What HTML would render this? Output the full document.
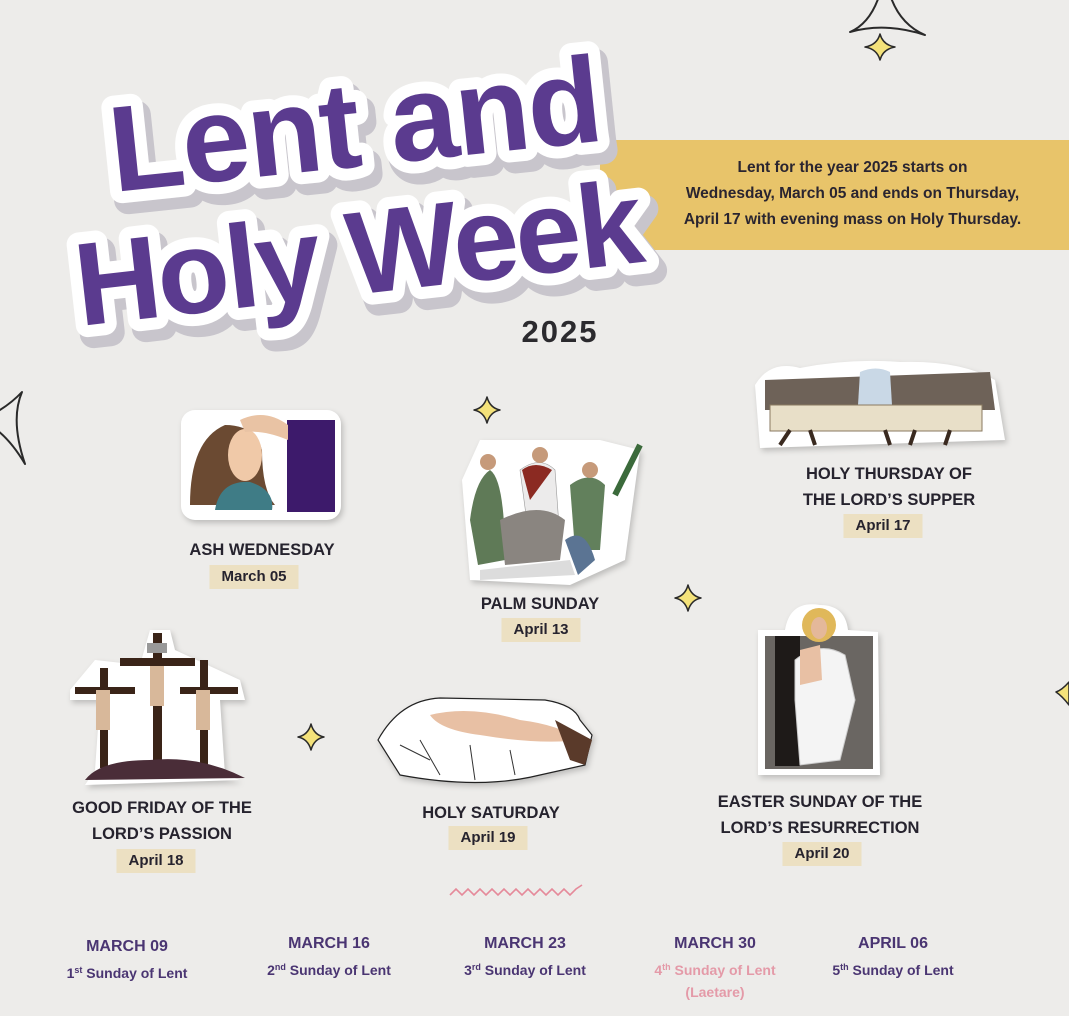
<!DOCTYPE html>
<html><head><meta charset="utf-8"><style>
*{margin:0;padding:0;box-sizing:border-box}
body{width:1069px;height:1016px;overflow:hidden;background:#edecea;position:relative;font-family:"Liberation Sans",sans-serif}
.a{position:absolute}
.lbl{position:absolute;text-align:center;font-weight:bold;color:#26232e;font-size:16.5px;line-height:26px;transform:translateX(-50%);white-space:nowrap}
.pill{position:absolute;background:#ece0c2;color:#26232e;font-weight:bold;font-size:15px;height:24px;line-height:24px;padding:0 12px;transform:translateX(-50%);white-space:nowrap}
.sun{position:absolute;text-align:center;transform:translateX(-50%);white-space:nowrap;color:#4a3572;font-weight:bold}
.sun b{display:block;font-size:16px;line-height:24px}
.sun span{display:block;font-size:14px;line-height:22px}
.sun sup{font-size:9px;vertical-align:5px}
.banner{position:absolute;left:600px;top:140px;width:469px;height:110px;background:#e8c46a;color:#2a2530;font-size:15.5px;font-weight:bold;text-align:center;line-height:26px;padding-top:15px;padding-left:36px}
</style></head><body>

<div class="banner">Lent for the year 2025 starts on<br>Wednesday, March 05 and ends on Thursday,<br>April 17 with evening mass on Holy Thursday.</div>

<svg class="a" style="left:0;top:0" width="1069" height="1016">
<g font-family="Liberation Sans" font-weight="bold" paint-order="stroke" stroke-linejoin="round">
 <g font-size="122" letter-spacing="-2">
 <g transform="translate(120,201) rotate(-6)"><text fill="#c8c5cc" stroke="#c8c5cc" stroke-width="28">Lent and</text></g>
 <g transform="translate(114,192) rotate(-6)"><text fill="#5b3b8f" stroke="#fff" stroke-width="24">Lent and</text></g>
 </g>
 <g font-size="118" letter-spacing="-3">
 <g transform="translate(86,335) rotate(-6.5)"><text fill="#c8c5cc" stroke="#c8c5cc" stroke-width="28">Holy Week</text></g>
 <g transform="translate(80,326) rotate(-6.5)"><text fill="#5b3b8f" stroke="#fff" stroke-width="24">Holy Week</text></g>
 </g>
</g>
<text x="560" y="342" text-anchor="middle" font-family="Liberation Sans" font-weight="bold" font-size="31" fill="#2b2a2e" letter-spacing="2">2025</text>

<!-- stars -->
<g fill="#f4e27a" stroke="#2a2a2a" stroke-width="1.5" stroke-linejoin="round">
 <path d="M885 -30 Q890 20 925 35 Q885 22 850 32 Q878 20 885 -30Z" fill="none" stroke-width="2"/>
 <path d="M880 34 Q883 45 895 47 Q883 49 880 60 Q877 49 865 47 Q877 45 880 34Z"/>
 <path d="M487 397 Q490 408 500 410 Q490 412 487 423 Q484 412 474 410 Q484 408 487 397Z"/>
 <path d="M688 585 Q691 596 701 598 Q691 600 688 611 Q685 600 675 598 Q685 596 688 585Z"/>
 <path d="M311 724 Q314 735 324 737 Q314 739 311 750 Q308 739 298 737 Q308 735 311 724Z"/>
 <path d="M-20 420 Q5 410 22 392 Q10 420 25 464 Q5 430 -20 420Z" fill="none" stroke-width="2"/>
 <path d="M1069 682 Q1062 690 1056 692 Q1062 696 1069 705Z"/>
</g>
<path d="M450 895 l6 -6 l6 6 l6 -6 l6 6 l6 -6 l6 6 l6 -6 l6 6 l6 -6 l6 6 l6 -6 l6 6 l6 -6 l6 6 l6 -6 l6 6 l6 -6 l6 6 l6 -6 l6 6 l6 -6 l6 -4" fill="none" stroke="#e58a9a" stroke-width="1.6"/>

<!-- Ash Wednesday -->
<g>
 <rect x="181" y="410" width="160" height="110" rx="14" fill="#fff" filter="drop-shadow(2px 3px 3px rgba(0,0,0,.2))"/>
 <path d="M190 505 Q190 440 225 425 Q255 425 262 450 Q262 490 275 505Z" fill="#6b4a32"/>
 <ellipse cx="245" cy="455" rx="17" ry="26" fill="#f0c9a8"/>
 <path d="M215 510 Q220 480 250 482 Q275 490 272 510Z" fill="#3f7c86"/>
 <rect x="287" y="420" width="48" height="92" fill="#3d1a6b"/>
 <path d="M240 420 Q265 408 288 425 L288 440 Q265 430 245 432Z" fill="#e9c3a4"/>
</g>

<!-- Palm Sunday -->
<g>
 <path d="M462 480 L480 440 L600 440 L640 450 L625 560 L570 585 L470 580Z" fill="#fff" filter="drop-shadow(2px 3px 3px rgba(0,0,0,.2))"/>
 <path d="M470 520 Q475 480 490 470 Q505 480 505 560 L478 565Z" fill="#5f7a57"/>
 <path d="M520 470 Q540 455 555 470 L560 540 L530 545Z" fill="#ecebeb" stroke="#999" stroke-width=".6"/>
 <path d="M522 470 Q535 460 552 470 L530 500Z" fill="#8b2a22"/>
 <path d="M570 485 Q590 470 605 485 L600 550 L575 550Z" fill="#62805c"/>
 <path d="M500 520 Q540 500 565 520 L560 560 L505 565Z" fill="#8a8580"/>
 <path d="M565 540 Q585 525 595 560 L578 575 Z" fill="#5b7493"/>
 <path d="M480 570 L570 560 L575 575 L480 580Z" fill="#dcdcdc"/>
 <path d="M615 495 L640 445" stroke="#3b6a3b" stroke-width="6"/>
 <circle cx="488" cy="462" r="8" fill="#c69a7a"/><circle cx="540" cy="455" r="8" fill="#c69a7a"/><circle cx="590" cy="470" r="8" fill="#c69a7a"/>
</g>

<!-- Last supper -->
<g>
 <path d="M755 385 Q770 360 800 368 Q850 358 900 362 Q960 360 995 380 L1005 440 L760 448Z" fill="#fff" filter="drop-shadow(2px 3px 3px rgba(0,0,0,.2))"/>
 <path d="M765 380 L990 372 L995 410 L765 410Z" fill="#6e6258"/>
 <path d="M860 372 Q876 365 890 372 L892 405 L858 405Z" fill="#c9d8e6"/>
 <rect x="770" y="405" width="212" height="26" fill="#e8dfc8" stroke="#8a7a60" stroke-width="1"/>
 <path d="M780 445 L790 430 M815 445 L810 430 M890 445 L885 430 M910 445 L915 430 M945 445 L950 430" stroke="#3a2a20" stroke-width="4"/>
</g>

<!-- crosses -->
<g>
 <path d="M70 690 L95 660 L140 665 L150 630 L170 630 L175 650 L240 680 L245 700 L220 700 L225 775 L240 780 L85 785 L95 770 L100 700 L70 700Z" fill="#fff" filter="drop-shadow(2px 3px 3px rgba(0,0,0,.2))"/>
 <g fill="#3a2418"><rect x="153" y="633" width="9" height="132"/><rect x="120" y="658" width="75" height="8"/><rect x="100" y="668" width="8" height="100"/><rect x="75" y="687" width="60" height="7"/><rect x="200" y="660" width="8" height="108"/><rect x="180" y="687" width="58" height="7"/></g>
 <path d="M85 780 Q100 760 150 760 Q200 755 245 778Z" fill="#4a2d38"/>
 <g fill="#d8b89a"><rect x="96" y="690" width="14" height="40"/><rect x="150" y="666" width="14" height="40"/><rect x="196" y="690" width="14" height="40"/></g>
 <rect x="147" y="643" width="20" height="10" fill="#999"/>
</g>

<!-- Holy Saturday -->
<g>
 <path d="M378 740 Q400 700 440 698 L545 700 Q575 705 580 720 L592 735 L585 765 L540 775 Q480 790 400 775Z" fill="#fff" filter="drop-shadow(2px 3px 3px rgba(0,0,0,.2))" stroke="#222" stroke-width="1.2"/>
 <path d="M430 715 Q470 705 520 720 Q560 725 580 740 Q540 745 480 735 Q440 730 430 715Z" fill="#e8c0a4"/>
 <path d="M555 720 L592 740 L585 765 L570 760Z" fill="#5a3a2a"/>
 <path d="M400 745 L430 760 M420 740 L440 775 M470 745 L475 780 M510 750 L515 775" stroke="#333" stroke-width="1"/>
</g>

<!-- Easter -->
<g>
 <path d="M758 630 L785 630 Q790 600 820 605 Q845 605 848 630 L878 632 L880 775 L758 775Z" fill="#fff" filter="drop-shadow(2px 3px 3px rgba(0,0,0,.2))"/>
 <rect x="765" y="636" width="108" height="133" fill="#6a6662"/>
 <rect x="775" y="636" width="25" height="130" fill="#1e1a18"/>
 <circle cx="819" cy="625" r="17" fill="#e0b85a"/>
 <ellipse cx="819" cy="628" rx="8" ry="11" fill="#e4b89a"/>
 <path d="M795 660 Q820 640 845 655 L855 700 L840 760 L800 765 L795 700Z" fill="#f4f4f4" stroke="#ccc" stroke-width="1"/>
 <path d="M800 650 L820 645 L822 680 L800 685Z" fill="#e8c0a4"/>
</g>
</svg>

<div class="lbl" style="left:262px;top:537px">ASH WEDNESDAY</div>
<div class="pill" style="left:254px;top:565px">March 05</div>

<div class="lbl" style="left:540px;top:591px">PALM SUNDAY</div>
<div class="pill" style="left:541px;top:618px">April 13</div>

<div class="lbl" style="left:889px;top:461px">HOLY THURSDAY OF<br>THE LORD’S SUPPER</div>
<div class="pill" style="left:883px;top:514px">April 17</div>

<div class="lbl" style="left:162px;top:795px">GOOD FRIDAY OF THE<br>LORD’S PASSION</div>
<div class="pill" style="left:156px;top:849px">April 18</div>

<div class="lbl" style="left:491px;top:800px">HOLY SATURDAY</div>
<div class="pill" style="left:488px;top:826px">April 19</div>

<div class="lbl" style="left:820px;top:789px">EASTER SUNDAY OF THE<br>LORD’S RESURRECTION</div>
<div class="pill" style="left:822px;top:842px">April 20</div>

<div class="sun" style="left:127px;top:935px"><b>MARCH 09</b><span>1<sup>st</sup> Sunday of Lent</span></div>
<div class="sun" style="left:329px;top:932px"><b>MARCH 16</b><span>2<sup>nd</sup> Sunday of Lent</span></div>
<div class="sun" style="left:525px;top:932px"><b>MARCH 23</b><span>3<sup>rd</sup> Sunday of Lent</span></div>
<div class="sun" style="left:715px;top:932px"><b>MARCH 30</b><span style="color:#e49aa8">4<sup>th</sup> Sunday of Lent<br>(Laetare)</span></div>
<div class="sun" style="left:893px;top:932px"><b>APRIL 06</b><span>5<sup>th</sup> Sunday of Lent</span></div>
</body></html>
